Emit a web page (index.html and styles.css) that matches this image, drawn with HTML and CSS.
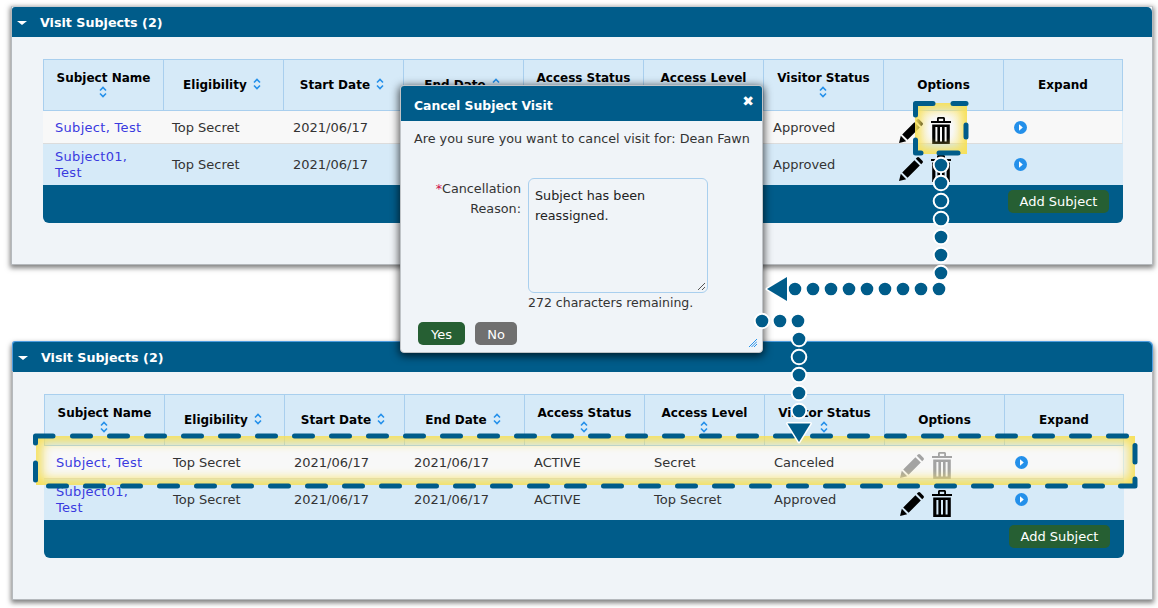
FILE: index.html
```html
<!DOCTYPE html>
<html lang="en">
<head>
<meta charset="utf-8">
<title>Visit Subjects</title>
<link rel="stylesheet" href="styles.css">
</head>
<body>
<svg width="0" height="0" class="defs" aria-hidden="true">
  <defs>
    <symbol id="sort" viewBox="0 0 8 12"><path d="M1 4.500 4 1.500 7 4.500M1 7.500 4 10.500 7 7.500" fill="none" stroke="currentColor" stroke-width="1.600"/></symbol>
    <symbol id="pencil" viewBox="0 0 24 24"><path d="M0 24 1.800 16.800 7.200 22.200Z M3.200 15.400 15.400 3.200 20.800 8.600 8.600 20.800Z M16.800 1.800 18 .6C18.700-.1 19.500-.1 20.200.6L23.400 3.800C24.100 4.500 24.100 5.300 23.400 6L22.200 7.200Z" fill="currentColor"/></symbol>
    <symbol id="trash" viewBox="0 0 20 27"><path fill-rule="evenodd" d="M6 4V1.600C6 .7 6.700 0 7.600 0H12.400C13.300 0 14 .7 14 1.600V4H20V6H0V4ZM7.800 4H12.200V1.800H7.800ZM1.200 7.400H18.800V27H1.200ZM4.400 10V24.400H6.400V10ZM9 10V24.400H11V10ZM13.600 10V24.400H15.600V10Z" fill="currentColor"/></symbol>
    <symbol id="expand" viewBox="0 0 13 13"><circle cx="6.500" cy="6.500" r="6.500" fill="#2490ea"/><path d="M5 3.200 8.800 6.500 5 9.800Z" fill="#fff"/></symbol>
  </defs>
</svg>

<section class="panel panel-first">
  <header class="panel-head"><span class="caret"></span><h2>Visit Subjects (2)</h2></header>
  <div class="panel-body">
    <table class="grid">
      <thead>
        <tr>
          <th>Subject Name <svg class="sort"><use href="#sort"/></svg></th>
          <th>Eligibility <svg class="sort"><use href="#sort"/></svg></th>
          <th>Start Date <svg class="sort"><use href="#sort"/></svg></th>
          <th>End Date <svg class="sort"><use href="#sort"/></svg></th>
          <th>Access Status <svg class="sort"><use href="#sort"/></svg></th>
          <th>Access Level <svg class="sort"><use href="#sort"/></svg></th>
          <th>Visitor Status <svg class="sort"><use href="#sort"/></svg></th>
          <th>Options</th>
          <th>Expand</th>
        </tr>
      </thead>
      <tbody>
        <tr class="row-a">
          <td class="name"><a href="#">Subject, Test</a></td><td class="level">Top Secret</td><td>2021/06/17</td><td>2021/06/17</td><td>ACTIVE</td><td>Secret</td><td>Approved</td>
          <td class="opts"><div class="tools"><svg class="pencil"><use href="#pencil"/></svg><svg class="trash"><use href="#trash"/></svg></div></td>
          <td class="exp"><svg class="expand"><use href="#expand"/></svg></td>
        </tr>
        <tr class="row-b">
          <td class="name"><a href="#">Subject01, Test</a></td><td class="level">Top Secret</td><td>2021/06/17</td><td>2021/06/17</td><td>ACTIVE</td><td>Top Secret</td><td>Approved</td>
          <td class="opts"><div class="tools"><svg class="pencil"><use href="#pencil"/></svg><svg class="trash"><use href="#trash"/></svg></div></td>
          <td class="exp"><svg class="expand"><use href="#expand"/></svg></td>
        </tr>
      </tbody>
      <tfoot><tr><td colspan="9"><button class="btn btn-green add" type="button">Add Subject</button></td></tr></tfoot>
    </table>
  </div>
</section>

<section class="panel panel-second">
  <header class="panel-head"><span class="caret"></span><h2>Visit Subjects (2)</h2></header>
  <div class="panel-body">
    <table class="grid">
      <thead>
        <tr>
          <th>Subject Name <svg class="sort"><use href="#sort"/></svg></th>
          <th>Eligibility <svg class="sort"><use href="#sort"/></svg></th>
          <th>Start Date <svg class="sort"><use href="#sort"/></svg></th>
          <th>End Date <svg class="sort"><use href="#sort"/></svg></th>
          <th>Access Status <svg class="sort"><use href="#sort"/></svg></th>
          <th>Access Level <svg class="sort"><use href="#sort"/></svg></th>
          <th>Visitor Status <svg class="sort"><use href="#sort"/></svg></th>
          <th>Options</th>
          <th>Expand</th>
        </tr>
      </thead>
      <tbody>
        <tr class="row-a">
          <td class="name"><a href="#">Subject, Test</a></td><td class="level">Top Secret</td><td>2021/06/17</td><td>2021/06/17</td><td>ACTIVE</td><td>Secret</td><td>Canceled</td>
          <td class="opts muted"><div class="tools"><svg class="pencil"><use href="#pencil"/></svg><svg class="trash"><use href="#trash"/></svg></div></td>
          <td class="exp"><svg class="expand"><use href="#expand"/></svg></td>
        </tr>
        <tr class="row-b">
          <td class="name"><a href="#">Subject01, Test</a></td><td class="level">Top Secret</td><td>2021/06/17</td><td>2021/06/17</td><td>ACTIVE</td><td>Top Secret</td><td>Approved</td>
          <td class="opts"><div class="tools"><svg class="pencil"><use href="#pencil"/></svg><svg class="trash"><use href="#trash"/></svg></div></td>
          <td class="exp"><svg class="expand"><use href="#expand"/></svg></td>
        </tr>
      </tbody>
      <tfoot><tr><td colspan="9"><button class="btn btn-green add" type="button">Add Subject</button></td></tr></tfoot>
    </table>
  </div>
</section>

<div class="dialog" role="dialog">
  <header class="dialog-head"><h3>Cancel Subject Visit</h3><span class="close">✖</span></header>
  <div class="dialog-body">
    <p class="question">Are you sure you want to cancel visit for: Dean Fawn</p>
    <div class="field">
      <label class="field-label"><span class="req">*</span>Cancellation Reason:</label>
      <div class="field-main">
        <div class="textarea">Subject has been reassigned.<svg class="grip" viewBox="0 0 9 9"><path d="M1 8 8 1M5 8 8 5" stroke="#555" fill="none"/></svg></div>
        <div class="remaining">272 characters remaining.</div>
      </div>
    </div>
    <div class="actions">
      <button class="btn btn-green" type="button">Yes</button>
      <button class="btn btn-grey" type="button">No</button>
    </div>
  </div>
  <svg class="resize" viewBox="0 0 8 8"><path d="M0 8 8 0M2.500 8 8 2.500M5 8 8 5" stroke="#2490ea" fill="none"/></svg>
</div>

<div class="glow glow-trash"></div>
<div class="glow glow-row"></div>

<svg class="marks" viewBox="0 0 1158 608" aria-hidden="true">
  <g class="dash">
    <path d="M915.500 115V103.500H933"/>
    <path d="M953 103.500H966"/>
    <path d="M966 125V137"/>
    <path d="M939 153H958"/>
    <path d="M915.500 140V153H921"/>
    <path d="M35.500 443V436H53"/>
    <path d="M72.500 436H1128" class="run"/>
    <path d="M48.500 486H1109" class="run"/>
    <path d="M1120.500 486H1135V479"/>
    <path d="M1135 445.500V462"/>
    <path d="M35.500 463V480"/>
  </g>
  <g class="dots">
    <circle cx="941" cy="165" r="7.300"/><circle cx="941" cy="183" r="7.300"/><circle cx="941" cy="201" r="7.300"/><circle cx="941" cy="219" r="7.300"/><circle cx="941" cy="237" r="7.300"/><circle cx="941" cy="255" r="7.300"/><circle cx="941" cy="273" r="7.300"/>
    <circle cx="939" cy="289" r="7.300"/><circle cx="921" cy="289" r="7.300"/><circle cx="903" cy="289" r="7.300"/><circle cx="885" cy="289" r="7.300"/><circle cx="867" cy="289" r="7.300"/><circle cx="849" cy="289" r="7.300"/><circle cx="831" cy="289" r="7.300"/><circle cx="813" cy="289" r="7.300"/><circle cx="795" cy="289" r="7.300"/>
    <circle cx="762" cy="321" r="7.300"/><circle cx="780" cy="321" r="7.300"/><circle cx="798" cy="321" r="7.300"/>
    <circle cx="799" cy="339" r="7.300"/><circle cx="799" cy="357" r="7.300"/><circle cx="799" cy="375" r="7.300"/><circle cx="799" cy="393" r="7.300"/><circle cx="799" cy="411" r="7.300"/>
  </g>
  <path class="arrow" d="M767 289 787 277V301Z"/>
  <path class="arrow" d="M787.500 423.500H810.500L799 442Z"/>
</svg>
</body>
</html>
```
FILE: styles.css
```css
* { box-sizing: border-box; }

html, body { margin: 0; padding: 0; }

body {
  position: relative;
  width: 1158px;
  height: 608px;
  overflow: hidden;
  background: #fff;
  color: #333;
  font: 13px/16px "DejaVu Sans", Verdana, sans-serif;
}

.defs { position: absolute; }

.panel {
  background: #f0f4f8;
  border: 1px solid #b5b9bd;
  border-top-color: #c8ccd0;
  box-shadow: 0 2px 5px 1px rgba(0, 0, 0, .5);
  height: 259px;
}

.panel-first { margin: 6px 5px 0 11px; }

.panel-second {
  margin: 77px 5px 0 12px;
  border-top: 0;
  border-radius: 4px 6px 0 0;
  height: 258px;
}

.panel-head {
  display: flex;
  align-items: center;
  height: 30px;
  padding: 2px 0 0 5px;
  background: #005c8a;
  color: #fff;
  border-radius: 3px 5px 0 0;
}

.panel-second .panel-head {
  box-shadow: -1px -1px 0 #4d9de0, 1px -1px 0 #4d9de0;
}

.panel-head h2 { margin: 0 0 0 13px; font-size: 12.700px; font-weight: 700; }

.caret {
  width: 0;
  height: 0;
  border: 5px solid transparent;
  border-top: 4px solid #fff;
  border-bottom: 0;
}

.panel-body { padding: 22px 0 0 31px; }

.grid {
  width: 1080px;
  table-layout: fixed;
  border-collapse: separate;
  border-spacing: 0;
}

.grid th {
  width: 120px;
  height: 52px;
  padding: 1px 10px 0;
  background: #d6eaf8;
  border: 1px solid #a9cfee;
  border-width: 1px 0 1px 1px;
  color: #000;
  font-size: 12px;
  font-weight: 700;
  text-align: center;
  line-height: 15px;
}

.grid th:last-child { border-right-width: 1px; }

.sort { width: 8px; height: 12px; margin: 0 3px 0 2px; color: #2490ea; vertical-align: -1px; }

.grid td { padding: 0 10px; line-height: 16px; }

.grid .row-a td { height: 33px; padding-top: 1px; background: #f8f8f8; border-bottom: 1px solid #dcdcdc; }
.row-b td { height: 41px; background: #d6eaf8; }

.row-a td:last-child, .row-b td:last-child { border-right: 1px solid #d6eaf8; }

.grid td.name { padding-left: 12px; }
.grid td.level { padding-left: 9px; }

.name a { color: #3a3adf; text-decoration: none; letter-spacing: .3px; }

.grid td.opts, .grid .row-a td.opts { padding: 6px 0 0 16px; vertical-align: top; }

.grid .row-b td.opts { padding-top: 11px; }

.tools { display: flex; align-items: center; height: 27px; margin-bottom: -12px; }

.pencil { width: 24px; height: 24px; flex: none; color: #000; }
.trash { width: 20px; height: 27px; flex: none; margin-left: 8px; color: #000; }

.muted .pencil, .muted .trash { color: #a3a3a3; }

.exp svg { display: block; }
.grid td.exp { padding-left: 11px; }
.expand { width: 13px; height: 13px; }

.grid tfoot td {
  height: 38px;
  padding: 0 14px 5px 0;
  background: #005c8a;
  border-radius: 0 0 6px 6px;
  text-align: right;
  vertical-align: middle;
}

.btn {
  height: 23px;
  padding: 0;
  border: 0;
  border-radius: 5px;
  color: #fff;
  font: 13px/23px "DejaVu Sans", Verdana, sans-serif;
}

.btn-green { background: #265f33; }
.btn-grey { background: #707070; }

.add { width: 101px; }

.dialog {
  position: absolute;
  left: 400px;
  top: 85px;
  width: 363px;
  height: 268px;
  background: #f0f4f8;
  border: 1px solid #c0c4c8;
  border-radius: 4px;
  box-shadow: 0 2px 8px 1px rgba(0, 0, 0, .7);
  font-size: 12.750px;
}

.dialog-head {
  display: flex;
  justify-content: space-between;
  height: 35px;
  padding: 11px 8px 0 13px;
  background: #005c8a;
  color: #fff;
  border-radius: 3px 3px 0 0;
}

.dialog-head h3 { margin: 0; font-size: 12.400px; font-weight: 700; line-height: 18px; }

.close { font-size: 14px; line-height: 10px; margin-top: -1px; font-family: "DejaVu Sans", sans-serif; }

.dialog-body { padding: 10px 13px 0 13px; }

.question { margin: 0 0 31px; white-space: nowrap; line-height: 16px; }

.field { display: flex; align-items: flex-start; gap: 7px; }

.field-label {
  width: 107px;
  padding-top: 1px;
  text-align: right;
  line-height: 20px;
}

.req { color: #d0104c; }

.field-main { width: 180px; }

.textarea {
  position: relative;
  height: 115px;
  padding: 7px 6px;
  background: #f0f4f8;
  border: 1px solid #a9cfee;
  border-radius: 6px;
  color: #222;
  line-height: 20px;
}

.grip { position: absolute; right: 1px; bottom: 1px; width: 9px; height: 9px; }

.remaining { margin-top: 2px; line-height: 16px; font-size: 12.500px; }

.actions { display: flex; gap: 10px; margin: 11px 0 0 4px; }
.actions .btn { padding-top: 1px; }
.actions .btn-green { width: 47px; }
.actions .btn-grey { width: 42px; }

.resize { position: absolute; right: 5px; bottom: 5px; width: 8px; height: 8px; }

.glow { position: absolute; pointer-events: none; }

.glow-trash {
  left: 915px;
  top: 103px;
  width: 52px;
  height: 51px;
  background: radial-gradient(ellipse at center, rgba(255, 255, 255, 0) 32%, rgba(250, 228, 100, .55) 78%);
  box-shadow: inset 0 0 10px 5px rgb(247, 224, 90);
}

.glow-row {
  left: 36px;
  top: 436px;
  width: 1099px;
  height: 49px;
  box-shadow: inset 0 0 11px 6px rgb(247, 224, 90);
}

.marks {
  position: absolute;
  left: 0;
  top: 0;
  width: 1158px;
  height: 608px;
  pointer-events: none;
}

.dash path { fill: none; stroke: #005c8a; stroke-width: 5; stroke-linecap: round; stroke-linejoin: round; }
.dash path.run { stroke-dasharray: 18 19; }

.dots circle { fill: #005c8a; stroke: #fff; stroke-width: 2; }

.arrow { fill: #005c8a; stroke: #fff; stroke-width: 3; stroke-linejoin: round; paint-order: stroke; }
```
